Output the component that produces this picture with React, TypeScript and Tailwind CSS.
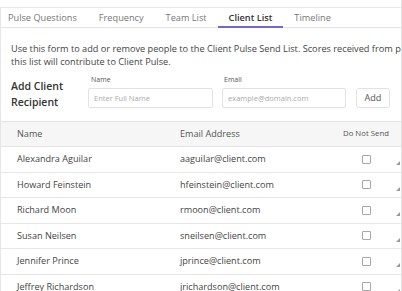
import React from "react";

const rows = [
  ["Alexandra Aguilar", "aaguilar@client.com"],
  ["Howard Feinstein", "hfeinstein@client.com"],
  ["Richard Moon", "rmoon@client.com"],
  ["Susan Neilsen", "sneilsen@client.com"],
  ["Jennifer Prince", "jprince@client.com"],
  ["Jeffrey Richardson", "jrichardson@client.com"],
];

const tabs = ["Pulse Questions", "Frequency", "Team List", "Client List", "Timeline"];

export default function App() {
  return (
    <div
      className="w-[402px] h-[291px] overflow-hidden bg-white text-[#555] border-r border-[#e3e3e3]"
      style={{ fontFamily: '"Open Sans", sans-serif' }}
    >
      <div className="mt-[7px] w-[401px] h-[284px] border-t border-l border-[#e6e6e6] overflow-hidden">
        {/* tabs */}
        <div className="flex h-[20px] border-b border-[#e3e3e3]">
          <div className="flex -ml-[4px]">
            {tabs.map((t) => {
              const active = t === "Client List";
              return (
                <div
                  key={t}
                  className={
                    "relative px-[11px] text-[9.2px] leading-[19px] whitespace-nowrap " +
                    (active ? "text-[#333] font-semibold" : "text-[#777]")
                  }
                >
                  {t}
                  {active && (
                    <div className="absolute left-0 right-0 bottom-[-1px] h-[2px] bg-[#7466d6]" />
                  )}
                </div>
              );
            })}
          </div>
        </div>

        {/* description */}
        <div className="pl-[10px] pt-[15px] text-[9.2px] leading-[12.5px] text-[#444] whitespace-nowrap">
          <div>Use this form to add or remove people to the Client Pulse Send List. Scores received from people on</div>
          <div>this list will contribute to Client Pulse.</div>
        </div>

        {/* add form */}
        <div className="flex items-start pl-[10px] pt-[7px]">
          <div className="w-[77px] pt-[4px] text-[10.5px] leading-[15.5px] font-semibold text-[#333]">
            Add Client<br />Recipient
          </div>
          <div className="flex flex-col">
            <div className="pl-[3px] text-[7px] leading-[10px] text-[#555] mb-[3px]">Name</div>
            <div className="w-[125px] h-[20px] border border-[#e2e2e2] rounded-[2px] px-[5px] text-[7.5px] leading-[18px] text-[#aaa]">
              Enter Full Name
            </div>
          </div>
          <div className="flex flex-col ml-[9px]">
            <div className="pl-[2px] text-[7px] leading-[10px] text-[#555] mb-[3px]">Email</div>
            <div className="w-[124px] h-[20px] border border-[#e2e2e2] rounded-[2px] px-[5px] text-[7.5px] leading-[18px] text-[#aaa]">
              example@domain.com
            </div>
          </div>
          <div className="ml-[10px] mt-[13px] w-[34px] h-[20px] border border-[#e2e2e2] rounded-[3px] text-center text-[9.1px] leading-[18px] text-[#555]">
            Add
          </div>
        </div>

        {/* table */}
        <div className="mt-[11px] w-[401px]">
          <div className="flex h-[26px] items-center bg-[#f6f6f6] border-t border-b border-[#e3e3e3] text-[9.1px] text-[#555]">
            <div className="w-[179px] pl-[16px]">Name</div>
            <div className="w-[163px]">Email Address</div>
            <div className="text-[7.8px]">Do Not Send</div>
          </div>
          {rows.map(([n, e]) => (
            <div key={n} className="flex h-[25.5px] items-center border-b border-[#e6e6e6] text-[9.1px] text-[#444]">
              <div className="w-[179px] pl-[16px] whitespace-nowrap">{n}</div>
              <div className="w-[182px] whitespace-nowrap">{e}</div>
              <div className="w-[9px] h-[9px] border border-[#a8a8a8] rounded-[1px]" />
              <svg width="4" height="4" viewBox="0 0 4 4" className="ml-[25px] mt-[8px]">
                <path d="M4 0 L4 4 L0 4 Z" fill="#999" />
              </svg>
            </div>
          ))}
        </div>
      </div>
    </div>
  );
}
